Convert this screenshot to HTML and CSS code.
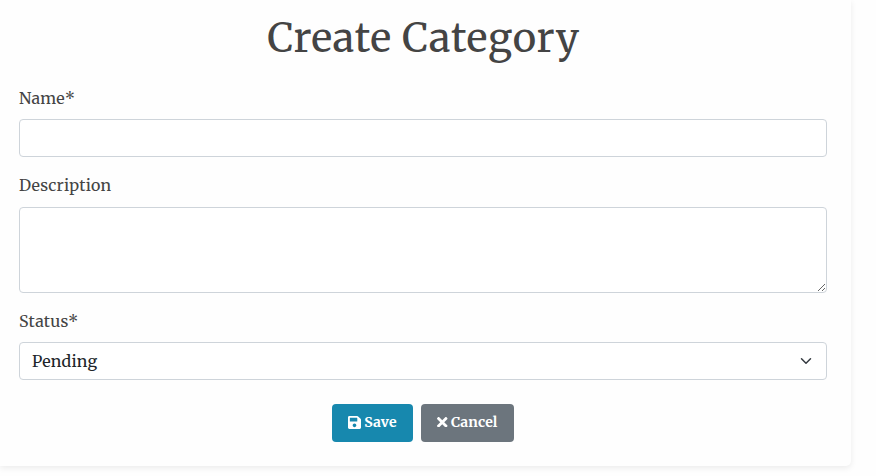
FILE: index.html
```
<!DOCTYPE html>
<html lang="en">
<head>
<meta charset="utf-8">
<title>Create Category</title>
<link rel="stylesheet" href="styles.css">
</head>
<body>
<main class="card">
  <h1 class="title">Create Category</h1>
  <form class="form">
    <div class="field">
      <label class="label" for="name">Name*</label>
      <input class="control" id="name" type="text">
    </div>
    <div class="field field-description">
      <label class="label" for="description">Description</label>
      <textarea class="control area" id="description"></textarea>
    </div>
    <div class="field field-status">
      <label class="label" for="status">Status*</label>
      <div class="control select" id="status" role="combobox" tabindex="0">
        <span>Pending</span>
        <svg class="chevron" viewBox="0 0 16 16"><path d="m2 5 6 6 6-6" fill="none" stroke="#343a40" stroke-width="2" stroke-linecap="round" stroke-linejoin="round"/></svg>
      </div>
    </div>
    <div class="actions">
      <button class="btn save" type="button">
        <svg class="icon-save" viewBox="0 32 448 448"><path fill="currentColor" d="M433.941 129.941l-83.882-83.882A48 48 0 0 0 316.118 32H48C21.49 32 0 53.49 0 80v352c0 26.51 21.49 48 48 48h352c26.51 0 48-21.49 48-48V163.882a48 48 0 0 0-14.059-33.941zM224 416c-35.346 0-64-28.654-64-64 0-35.346 28.654-64 64-64s64 28.654 64 64c0 35.346-28.654 64-64 64zm96-304.52V212c0 6.627-5.373 12-12 12H76c-6.627 0-12-5.373-12-12V108c0-6.627 5.373-12 12-12h228.520c3.183 0 6.235 1.264 8.485 3.515l3.480 3.480A11.996 11.996 0 0 1 320 111.480z"/></svg>
        <span>Save</span>
      </button>
      <button class="btn cancel" type="button">
        <svg class="icon-x" viewBox="0 0 352 352"><path fill="currentColor" d="M242.720 176l100.070-100.070c12.280-12.280 12.280-32.190 0-44.480l-22.240-22.240c-12.280-12.280-32.190-12.280-44.480 0L176 109.280 75.930 9.210c-12.280-12.280-32.190-12.280-44.480 0L9.210 31.450c-12.280 12.280-12.280 32.190 0 44.480L109.280 176 9.210 276.070c-12.280 12.280-12.280 32.190 0 44.480l22.240 22.240c12.280 12.280 32.200 12.280 44.480 0L176 242.720l100.070 100.070c12.280 12.280 32.200 12.280 44.480 0l22.240-22.240c12.280-12.280 12.280-32.190 0-44.480L242.720 176z"/></svg>
        <span>Cancel</span>
      </button>
    </div>
  </form>
</main>
</body>
</html>
```
FILE: styles.css
```
* { box-sizing: border-box; }
body {
  margin: 0;
  height: 476px;
  overflow: hidden;
  background: #fefefe;
  color: #444;
  font-family: Merriweather, "DejaVu Serif Condensed", "DejaVu Serif", serif;
  font-size: 16px;
  font-weight: 400;
  letter-spacing: .2px;
}
.card {
  width: 851px;
  height: 466px;
  padding: 14px 24px 0 19px;
  background: #fefefe;
  border-radius: 0 0 5px 0;
  box-shadow: 0 2px 6px rgba(0, 0, 0, .08);
}
.title {
  margin: 0 0 24px;
  height: 48px;
  line-height: 48px;
  font-size: 40px;
  font-weight: 400;
  letter-spacing: .7px;
  text-align: center;
  text-indent: 1px;
  white-space: nowrap;
}
.form { display: flex; flex-direction: column; }
.field { display: flex; flex-direction: column; height: 87px; }
.field-description { height: 136px; }
.field-status { height: 95px; }
.label { height: 33px; line-height: 24px; font-size: 16px; }
.control {
  display: block;
  width: 100%;
  height: 38px;
  margin: 0;
  padding: 6px 12px;
  border: 1px solid #ced4da;
  border-radius: 4px;
  background: #fff;
  color: #212529;
  font: inherit;
}
.area { height: 86px; resize: vertical; margin-top: 1px; }
.select { display: flex; align-items: center; justify-content: space-between; }
.chevron { width: 16px; height: 12px; }
.actions { display: flex; justify-content: center; gap: 8px; }
.btn {
  display: flex;
  align-items: center;
  justify-content: center;
  height: 38px;
  padding: 0 0 2px;
  border: 0;
  border-radius: 4px;
  color: #fff;
  font-family: inherit;
  font-size: 14px;
  font-weight: 700;
  letter-spacing: .15px;
}
.save { width: 81px; gap: 3px; background: #1788ae; }
.cancel { width: 93px; gap: 3px; background: #6c757d; }
.icon-save { width: 13px; height: 13px; }
.icon-x { width: 10.500px; height: 10.500px; }
```
